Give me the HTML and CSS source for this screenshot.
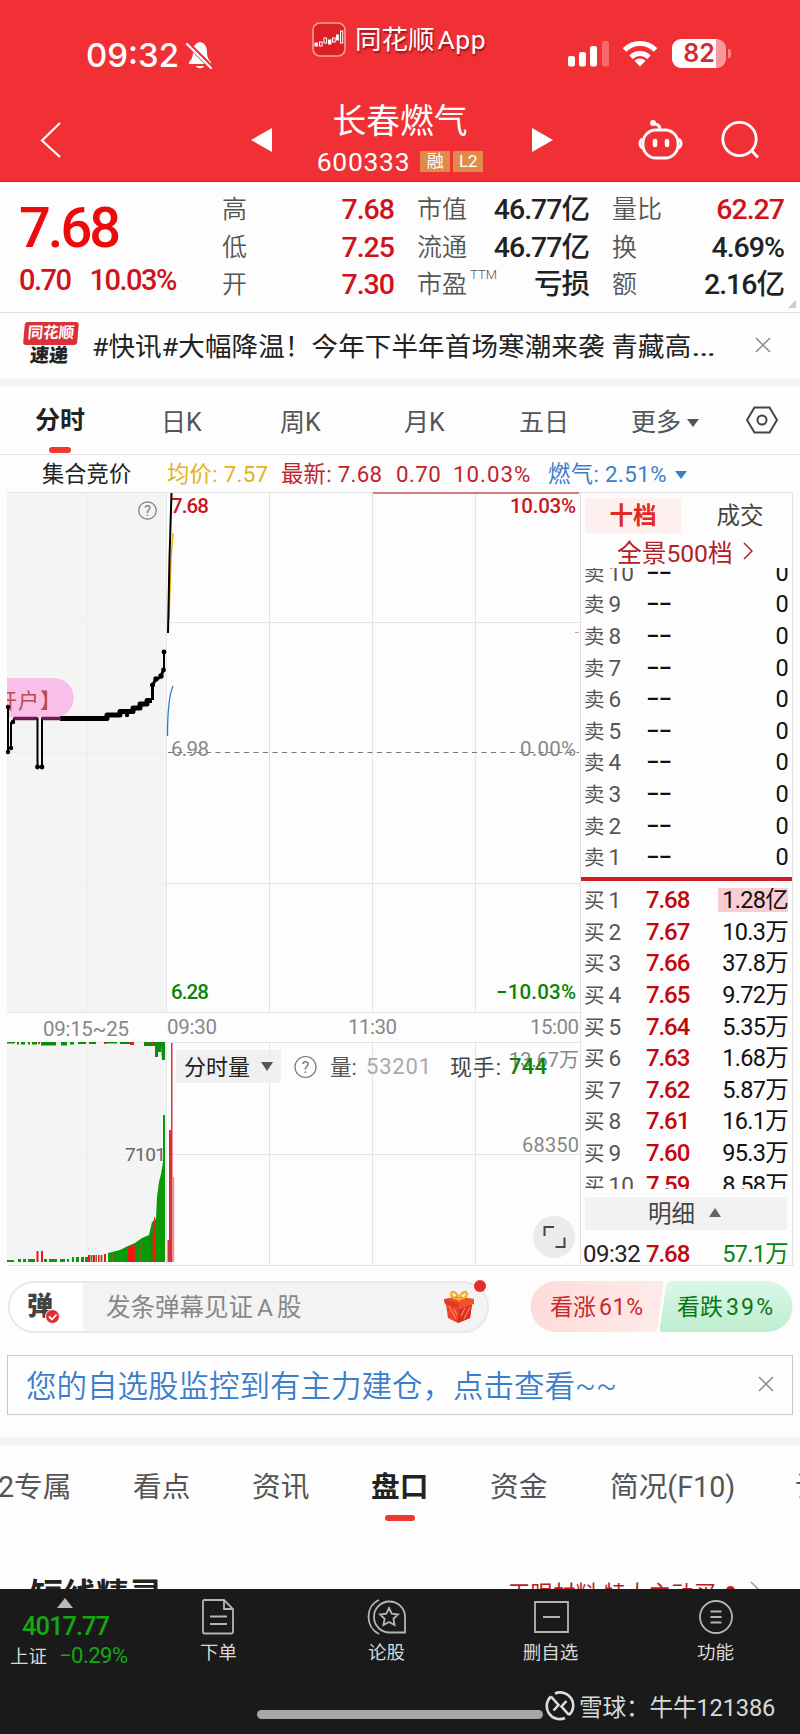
FILE: index.html
```html
<!DOCTYPE html>
<html lang="zh-CN">
<head>
  <meta charset="UTF-8">
  <meta name="viewport" content="width=device-width, initial-scale=1.0">
  <title>长春燃气 600333</title>
  <link rel="stylesheet" href="styles.css">
</head>
<body>
  <header class="header">
    <div class="status-bar">
      <div class="status-time">
        <span>09:32</span>
        <svg width="28" height="30" viewBox="0 0 28 30">
          <path d="M14 2c-5 1-7 5-7 10 0 6-2 8-4 10v2h22v-2c-2-2-4-4-4-10 0-5-2-9-7-10z" fill="#fff"/>
          <path d="M10 26h8c-1 3-7 3-8 0z" fill="#fff"/>
          <path d="M1 3l25 25" stroke="#f13035" stroke-width="5"/>
          <path d="M1 4l24 24" stroke="#fff" stroke-width="2.2" stroke-linecap="round"/>
        </svg>
      </div>
      <div class="app-mark">
        <svg width="34" height="35" viewBox="0 0 34 35">
          <rect x="1" y="1" width="32" height="33" rx="7" fill="#dd2028" stroke="#f9a09f" stroke-width="1.6"/>
          <g fill="#fff" stroke="#fff" stroke-width="1">
            <rect x="3" y="21" width="2.4" height="3"/>
            <rect x="7.5" y="20" width="2.6" height="4" fill="none"/>
            <rect x="12" y="16" width="2.6" height="5" fill="none"/>
            <rect x="16.5" y="18" width="2.4" height="4"/>
            <rect x="20.5" y="16" width="2.6" height="4" fill="none"/>
            <rect x="24.5" y="13" width="1.8" height="5"/>
            <rect x="28.5" y="9" width="2.2" height="12" fill="none"/>
          </g>
        </svg>
        <span>同花顺<b>App</b></span>
      </div>
      <div class="status-icons">
        <svg width="42" height="28" viewBox="0 0 42 28" fill="#fff">
          <rect x="0" y="16" width="7" height="10.5" rx="2"/>
          <rect x="11" y="12" width="7" height="14.5" rx="2"/>
          <rect x="22" y="6" width="7" height="20.5" rx="2"/>
          <rect x="34" y="1" width="7" height="25.5" rx="2" opacity=".28"/>
        </svg>
        <svg width="36" height="28" viewBox="0 0 36 28">
          <g fill="none" stroke="#fff" stroke-width="5">
            <path d="M2.5 10a22 22 0 0 1 31 0"/>
            <path d="M9 17.2a13 13 0 0 1 18 0"/>
          </g>
          <path d="M18 26.5l-5.6-5.8a8 8 0 0 1 11.2 0z" fill="#fff"/>
        </svg>
        <div class="battery"><span>82</span></div>
        <i class="battery-nub"></i>
      </div>
    </div>
    <div class="title-bar">
      <svg class="back" width="24" height="38" viewBox="0 0 24 38"><path d="M21 2L3 19.500l18 16.500" fill="none" stroke="#fff" stroke-width="2.200"/></svg>
      <svg width="22" height="24" viewBox="0 0 22 24"><path d="M0 12L21 0v24z" fill="#fff"/></svg>
      <div class="stock">
        <h1>长春燃气</h1>
        <div class="stock-code"><span>600333</span><b>融</b><b>L2</b></div>
      </div>
      <svg width="22" height="24" viewBox="0 0 22 24"><path d="M22 12L1 0v24z" fill="#fff"/></svg>
      <svg class="robot" width="46" height="42" viewBox="0 0 46 42" fill="none" stroke="#fff" stroke-width="2.800">
        <rect x="5" y="11" width="35" height="28" rx="13"/>
        <path d="M22 11c0-4-2-6-6-6"/>
        <path d="M4.500 20c-3.500 2-3.500 7 0 9M40.500 20c3.500 2 3.500 7 0 9"/>
        <circle cx="15" cy="4" r="1.500"/>
        <path d="M17 22v4M29 22v4" stroke-width="4.500" stroke-linecap="round"/>
      </svg>
      <svg class="search" width="40" height="40" viewBox="0 0 40 40" fill="none" stroke="#fff" stroke-width="2.800">
        <circle cx="18.500" cy="19" r="16.700"/><path d="M30.500 30.500l6.500 7"/>
      </svg>
    </div>
  </header>

  <section class="quote">
    <div class="quote-price">
      <div class="price">7.68</div>
      <div class="change"><span>0.70</span><span>10.03%</span></div>
    </div>
    <dl class="quote-list">
      <dt>高</dt><dd class="red">7.68</dd>
      <dt>低</dt><dd class="red">7.25</dd>
      <dt>开</dt><dd class="red">7.30</dd>
    </dl>
    <dl class="quote-list cap">
      <dt>市值</dt><dd>46.77亿</dd>
      <dt>流通</dt><dd>46.77亿</dd>
      <dt>市盈<sup>TTM</sup></dt><dd>亏损</dd>
    </dl>
    <dl class="quote-list ratio">
      <dt>量比</dt><dd class="red">62.27</dd>
      <dt>换</dt><dd>4.69%</dd>
      <dt>额</dt><dd>2.16亿</dd>
    </dl>
    <i class="corner"></i>
  </section>

  <section class="news">
    <div class="news-logo"><b>同花顺</b><em>速递</em></div>
    <p>#快讯#大幅降温！今年下半年首场寒潮来袭 青藏高<span>…</span></p>
    <svg width="16" height="16" viewBox="0 0 16 16"><path d="M1 1l14 14M15 1L1 15" stroke="#888" stroke-width="1.500"/></svg>
  </section>

  <nav class="periods">
    <span class="active">分时</span>
    <span>日K</span>
    <span>周K</span>
    <span>月K</span>
    <span>五日</span>
    <span>更多<i class="down"></i></span>
    <svg width="32" height="28" viewBox="0 0 32 28" fill="none" stroke="#444" stroke-width="2">
      <path d="M8.500 1.500h15L31 14l-7.500 12.500h-15L1 14z"/><circle cx="16" cy="14" r="4.500"/>
    </svg>
  </nav>

  <div class="legend">
    <span class="auction">集合竞价</span>
    <span class="avg">均价: 7.57</span>
    <span class="last">最新: 7.68</span>
    <span class="diff">0.70</span>
    <span class="pct">10.03%</span>
    <span class="sector">燃气: 2.51%<i class="down"></i></span>
  </div>

  <main class="board">
    <svg class="chart" width="580" height="774" viewBox="0 492 580 774">
      <!-- call auction background -->
      <path d="M7 493h159.500v520H7zM7 1043h159.500v219H7z" fill="#f4f4f4"/>
      <g fill="none" stroke="#e4e4e4">
        <path d="M7 492.500h573M167 622.500h413M167 883.500h413M7 1012.500h573M7 1042.500h573M167 1154.500h413M7 1265.500h573"/>
        <path d="M166.500 493v520M269.500 493v520M372.500 493v520M475.500 493v520M166.500 1043v222M269.500 1043v222M372.500 1043v222M475.500 1043v222"/>
        <path d="M87.500 493v520M87.500 1043v219M7 622.500h160M7 752.500h160M7 883.500h160M7 1154.500h160" stroke-dasharray="2 2" stroke="#e9e9e9"/>
      </g>
      <path d="M373 493h206" stroke="#c8555a" stroke-width="1.500"/>
      <path d="M575 632.500h4" stroke="#d99"/>
      <path d="M168 752.500h411" stroke="#777" stroke-dasharray="5 4.500"/>
      <g font-size="20.500">
        <text x="171" y="513" fill="#c8161d" class="num" textLength="38">7.68</text>
        <text x="510" y="513" fill="#c8161d" class="num" textLength="66">10.03%</text>
        <text x="171" y="756" fill="#888" class="num thin" textLength="38">6.98</text>
        <text x="520" y="756" fill="#888" class="num thin" textLength="56">0.00%</text>
        <text x="171" y="999" fill="#078507" class="num" textLength="38">6.28</text>
        <text x="496" y="999" fill="#078507" class="num" textLength="80">−10.03%</text>
        <text x="43" y="1036" fill="#888" textLength="86">09:15~25</text>
        <text x="167" y="1034" fill="#888" textLength="50">09:30</text>
        <text x="348" y="1034" fill="#888" textLength="49">11:30</text>
        <text x="530" y="1034" fill="#888" textLength="49">15:00</text>
      </g>
      <circle cx="147.500" cy="510.500" r="8.700" fill="none" stroke="#777" stroke-width="1.200"/>
      <text x="147.500" y="516" font-size="14" fill="#777" text-anchor="middle">?</text>

      <!-- danmaku bubble -->
      <path d="M7 678h47a19 19 0 0 1 0 39.500H7z" fill="#f8c0e8"/>
      <svg x="7" y="678" width="66" height="40"><text x="-11" y="30" font-size="21" fill="#b94a52" letter-spacing="1">开户】</text></svg>

      <!-- prices -->
      <path d="M8 707v45M11 722v26M13 722l1-3.500H37.500V767H42V718.500H107" fill="none" stroke="#000" stroke-width="2"/>
      <path d="M60 718.500h47v-3.500h13v-3.500h13v-3.500h7v-4h7v-3.500h5" fill="none" stroke="#000" stroke-width="5" stroke-linejoin="round"/>
      <path d="M14 718.500h23M42 718.500h19" stroke="#6d1555" stroke-width="3.500"/>
      <path d="M152.500 700v-15l3-5 5-3 3-7" fill="none" stroke="#000" stroke-width="3"/>
      <path d="M164 670v-18" stroke="#000" stroke-width="2"/>
      <g fill="#000">
        <circle cx="8" cy="752" r="2.200"/><circle cx="11" cy="748" r="2.200"/><circle cx="13" cy="722" r="2.200"/><circle cx="8" cy="707" r="2.200"/>
        <circle cx="37.500" cy="767" r="2.400"/><circle cx="42" cy="767" r="2.400"/><circle cx="127" cy="715" r="2.200"/>
        <circle cx="152.500" cy="685" r="2.500"/><circle cx="156" cy="679" r="2.700"/><circle cx="161" cy="676" r="2.700"/><circle cx="163.500" cy="670" r="2.400"/><circle cx="164" cy="652" r="2.400"/>
      </g>
      <path d="M169 620l2-62 2-25" fill="none" stroke="#eea812" stroke-width="1.500"/>
      <path d="M168 633l1.500-75 2-65" fill="none" stroke="#000" stroke-width="2"/>
      <path d="M167.500 736c0-25 2-42 5.500-50" fill="none" stroke="#2f7fd0" stroke-width="1.300"/>

      <!-- volume -->
      <g font-size="20" fill="#888">
        <text x="125" y="1161" font-size="19" fill="#666" textLength="41">7101</text>
        <text x="509" y="1067" textLength="70">13.67万</text>
        <text x="522" y="1152" textLength="57">68350</text>
      </g>
      <path d="M7 1262v-2h7v2zM18 1262v-3h3v3zM23 1262v-3h3v3zM28 1262v-3h7v3zM44 1262v-3h3v3zM49 1262v-3h8v3zM60 1262v-3h5v3zM67 1262v-3h2v3zM72 1262v-5h2v5zM76 1262v-5h3v5zM81 1262v-5h3v5zM85 1262v-5h3v5zM108 1262v-9l12-3 8-4 7-3 7-5 7-3 3-13 4-3 1-22 2-15 2-8 2-12v-47h2v147z" fill="#069a06"/>
      <path d="M36.500 1262v-11h2v11zM41 1262v-11h2v11zM128 1262v-15l7-2v17zM151 1262v-26h1.500v26zM154 1262v-45h1v45zM88 1262v-7h2v7zM93 1262v-7h2v7zM98 1262v-7h1.500v7zM104 1262v-8h2v8z" fill="#ef1515"/>
      <path d="M90.500 1262v-7h2v7zM95.500 1262v-7h1.500v7zM100.500 1262v-7h2v7zM112 1262v-9h1v9zM121 1262v-12h1v12zM140 1262v-21h1v21z" fill="#7b6a2e"/>
      <path d="M7 1042h8v1.500H7zM17 1042h2v2.500h-2zM21 1042h4v2.500h-4zM28 1042h2v2.500h-2zM32 1042h5v2.500h-5zM41 1042h15v3.500H41zM61 1042h6v3.500h-6zM70 1042h4v2.500h-4zM78 1042h8v2h-8zM89 1042h7v2h-7zM105 1042h12v1.500h-12zM120 1042h13v2h-13zM144 1042h21v4h-21zM155 1045h3v12h-3zM158 1045h3v7h-3zM161 1045h4v15h-3z" fill="#0b8c0b"/>
      <path d="M38 1042h2v2h-2zM104 1042h2v2h-2zM130 1042h4v3h-4zM151 1042h2v4h-2z" fill="#d22"/>
      <path d="M167.500 1262v-22h1.500v-110h2v-87h1.500v219z" fill="#dc3038"/>
      <path d="M172.500 1177h1.700v85h-1.700z" fill="#eb9095"/>

      <!-- volume caption -->
      <rect x="176" y="1050" width="105" height="33" rx="2" fill="#ececec" opacity=".8"/>
      <text x="184" y="1075" font-size="22" fill="#222">分时量</text>
      <path d="M261 1062h12l-6 9z" fill="#555"/>
      <circle cx="305.500" cy="1067" r="10.500" fill="none" stroke="#777" stroke-width="1.200"/>
      <text x="305.500" y="1073" font-size="16" fill="#777" text-anchor="middle">?</text>
      <text x="330" y="1075" font-size="21.500" fill="#555">量:</text>
      <text x="366" y="1074" font-size="22" fill="#aaa" class="num thin" textLength="65">53201</text>
      <text x="450" y="1075" font-size="22" fill="#444" textLength="51">现手:</text>
      <text x="509" y="1074" font-size="22" fill="#078507" class="num" textLength="38">744</text>

      <!-- fullscreen button -->
      <circle cx="554" cy="1237" r="21" fill="#ebebeb"/>
      <path d="M544.500 1236v-9H554M555.500 1247H564.500v-9.500" fill="none" stroke="#444" stroke-width="2"/>
    </svg>

    <aside class="book">
      <div class="book-tabs"><b>十档</b><span>成交</span></div>
      <div class="book-more">全景500档<svg width="10" height="18" viewBox="0 0 10 18"><path d="M1 1l8 8-8 8" fill="none" stroke="#b52025" stroke-width="1.500"/></svg></div>
      <ul class="asks">
        <li><span>卖<i>10</i></span><b>−−</b><em>0</em></li>
        <li><span>卖<i>9</i></span><b>−−</b><em>0</em></li>
        <li><span>卖<i>8</i></span><b>−−</b><em>0</em></li>
        <li><span>卖<i>7</i></span><b>−−</b><em>0</em></li>
        <li><span>卖<i>6</i></span><b>−−</b><em>0</em></li>
        <li><span>卖<i>5</i></span><b>−−</b><em>0</em></li>
        <li><span>卖<i>4</i></span><b>−−</b><em>0</em></li>
        <li><span>卖<i>3</i></span><b>−−</b><em>0</em></li>
        <li><span>卖<i>2</i></span><b>−−</b><em>0</em></li>
        <li><span>卖<i>1</i></span><b>−−</b><em>0</em></li>
      </ul>
      <ul class="bids">
        <li><span>买<i>1</i></span><b>7.68</b><em class="big">1.28亿</em></li>
        <li><span>买<i>2</i></span><b>7.67</b><em>10.3万</em></li>
        <li><span>买<i>3</i></span><b>7.66</b><em>37.8万</em></li>
        <li><span>买<i>4</i></span><b>7.65</b><em>9.72万</em></li>
        <li><span>买<i>5</i></span><b>7.64</b><em>5.35万</em></li>
        <li><span>买<i>6</i></span><b>7.63</b><em>1.68万</em></li>
        <li><span>买<i>7</i></span><b>7.62</b><em>5.87万</em></li>
        <li><span>买<i>8</i></span><b>7.61</b><em>16.1万</em></li>
        <li><span>买<i>9</i></span><b>7.60</b><em>95.3万</em></li>
        <li><span>买<i>10</i></span><b>7.59</b><em>8.58万</em></li>
      </ul>
      <div class="detail">明细<i class="up"></i></div>
      <div class="tick"><span>09:32</span><b>7.68</b><em>57.1万</em></div>
    </aside>
  </main>

  <section class="chat">
    <div class="chat-input">
      <div class="dan">弹<svg width="15" height="15" viewBox="0 0 15 15"><circle cx="7.500" cy="7.500" r="7" fill="#dc3033" stroke="#fff"/><path d="M4 7.500l3 3 4.500-5" fill="none" stroke="#fff" stroke-width="1.800"/></svg></div>
      <p>发条弹幕见证<span>A</span>股</p>
      <svg class="gift" width="32" height="34" viewBox="0 0 32 34">
        <path d="M3 14l13 5 13-5-2 14-12 5-10-5z" fill="#ee4127"/>
        <path d="M16 19l13-5-2 14-12 5z" fill="#d92d20"/>
        <path d="M1 9l14-3 16 3v5l-15 5-14-5z" fill="#f0512f"/>
        <path d="M1 9l15 4v6L2 14z" fill="#e03a25"/>
        <path d="M6 16l7 13M11 19l3 6M27 17l-6 12M22 18l-4 8" stroke="#f98a57" stroke-width="1.200"/>
        <path d="M16 9C8 9 6 2 10 2c3 0 5 4 6 7 1-3 3-7 6-7 4 0 2 7-6 7z" fill="none" stroke="#f5ad2a" stroke-width="2.400"/>
      </svg>
      <i class="dot"></i>
    </div>
    <div class="vote">
      <svg width="263" height="52" viewBox="530 1281 263 52">
        <defs>
          <linearGradient id="up" x2="1" y2="0"><stop stop-color="#fddcd9"/><stop offset="1" stop-color="#fdebe9"/></linearGradient>
          <linearGradient id="dn" x2="0" y2="1"><stop stop-color="#dcf7e7"/><stop offset="1" stop-color="#bdedd0"/></linearGradient>
        </defs>
        <path d="M556 1281h107q1 0 0 5l-5 41q-1 5-5 5h-97a25.500 25.500 0 0 1 0-51z" fill="url(#up)"/>
        <path d="M672 1281h95a25.500 25.500 0 0 1 0 51H662q-3 0-2-5l6-41q1-5 6-5z" fill="url(#dn)"/>
        <g font-size="23">
          <text x="550" y="1315" fill="#c8282c" textLength="46">看涨</text>
          <text x="599" y="1315" fill="#c8282c" textLength="44">61%</text>
          <text x="677" y="1315" fill="#07780f" textLength="46">看跌</text>
          <text x="726" y="1315" fill="#07780f" textLength="47">39%</text>
        </g>
      </svg>
    </div>
  </section>

  <div class="notice">
    <p>您的自选股监控到有主力建仓，点击查看~~</p>
    <svg width="16" height="16" viewBox="0 0 16 16"><path d="M1 1l14 14M15 1L1 15" stroke="#888" stroke-width="1.500"/></svg>
  </div>

  <nav class="sections">
    <span>2专属</span>
    <span>看点</span>
    <span>资讯</span>
    <span class="active">盘口</span>
    <span>资金</span>
    <span>简况(F10)</span>
    <span>诊股</span>
  </nav>

  <section class="elf">
    <h2>短线精灵</h2>
    <p>天眼材料 特大主动买</p>
    <i></i>
    <svg width="10" height="18" viewBox="0 0 10 18"><path d="M1 1l8 8-8 8" fill="none" stroke="#999" stroke-width="1.500"/></svg>
  </section>

  <footer class="toolbar">
    <div class="index">
      <i class="up"></i>
      <b>4017.77</b>
      <p>上证<span>−0.29%</span></p>
    </div>
    <div class="tool">
      <svg width="34" height="36" viewBox="0 0 34 36"><path d="M2.500 1H22l9 9v23q0 1.500-1.500 1.500h-27Q1 34.500 1 33V2.500Q1 1 2.500 1zM22 1v9h9M8 17.500h17M8 25h17"/></svg>
      <span>下单</span>
    </div>
    <div class="tool">
      <svg width="40" height="36" viewBox="0 0 40 36"><path d="M12 1C-2 7-2 28 12 35M38 33.500H23A15.500 15.500 0 1 1 38 18zM22 9l2.700 5.700 6.300.8-4.600 4.300 1.200 6.200-5.600-3-5.600 3 1.200-6.200-4.600-4.300 6.300-.8z"/></svg>
      <span>论股</span>
    </div>
    <div class="tool">
      <svg width="36" height="36" viewBox="0 0 36 36"><path d="M2 3h33v30H2zM10 18h17"/></svg>
      <span>删自选</span>
    </div>
    <div class="tool">
      <svg width="36" height="36" viewBox="0 0 36 36"><circle cx="18" cy="18" r="16"/><path d="M12.500 12.500h11M12.500 18h11M12.500 23.500h11"/></svg>
      <span>功能</span>
    </div>
    <div class="home">
      <i class="home-bar"></i>
      <svg width="30" height="30" viewBox="0 0 30 30" fill="none" stroke="#ddd" stroke-width="2.600">
        <path d="M10 2.500A13 13 0 0 1 24 24M20 27A13 13 0 0 1 6 5.500"/>
        <path d="M6 5.500l7.500 8.500-5 5.500M24 24l-7.500-8.500 5-5.500"/>
      </svg>
      <span>雪球：牛牛121386</span>
    </div>
  </footer>
</body>
</html>
```

FILE: styles.css
```css
* {
  box-sizing: border-box;
}

body {
  margin: 0;
  width: 800px;
  height: 1734px;
  overflow: hidden;
  background: #fdfdfd;
  color: #222;
  font-family: Roboto, "Noto Sans CJK SC", sans-serif;
}

h1, h2, p, dl, dd, ul {
  margin: 0;
  padding: 0;
}

svg {
  display: block;
  flex: none;
}

i, em {
  font-style: normal;
}

.red {
  color: #d0121b;
}

.down {
  display: inline-block;
  border: 6px solid transparent;
  border-top: 8px solid currentColor;
  border-bottom: 0;
}

.up {
  display: inline-block;
  border: 6px solid transparent;
  border-bottom: 9px solid #666;
  border-top: 0;
}

/* header */
.header {
  height: 182px;
  background: #f13035;
  border-bottom: 1px solid #c42a30;
  color: #fff;
}

.status-bar {
  display: grid;
  grid-template-columns: 312px 256px 232px;
  height: 95px;
}

.status-time {
  display: flex;
  align-items: center;
  gap: 7px;
  height: 109px;
  padding-left: 86px;
  font: 500 33px Inter, sans-serif;
}

.app-mark {
  display: flex;
  align-items: center;
  gap: 9px;
  height: 78px;
  font-size: 26.500px;
  line-height: 30px;
  text-shadow: 1px 2px 2px rgba(80, 0, 0, .6);
}

.app-mark span {
  padding-top: 2px;
}

.app-mark b {
  margin-left: 3px;
  font-weight: 400;
  letter-spacing: 0.500px;
}

.status-icons {
  display: flex;
  align-items: center;
  height: 107px;
}

.status-icons svg {
  margin-right: 12px;
}

.battery {
  width: 54px;
  height: 29px;
  margin-left: 2px;
  border-radius: 9px;
  background: linear-gradient(90deg, #fff 82%, #f9979a 82%);
  color: #d32a30;
  font: 600 25px/29px Inter, sans-serif;
  text-align: center;
}

.battery-nub {
  width: 3px;
  height: 9px;
  margin-left: 2px;
  border-radius: 0 4px 4px 0;
  background: #f8888c;
}

.title-bar {
  display: flex;
  align-items: center;
  height: 89px;
}

.back {
  margin: 0 188px 0 39px;
}

.stock {
  width: 258px;
  padding: 0 4px 0 0;
  text-align: center;
}

.stock h1 {
  font-size: 33.700px;
  font-weight: 400;
  line-height: 44px;
}

.stock-code {
  display: flex;
  align-items: center;
  justify-content: center;
  gap: 3px;
  height: 36px;
}

.stock-code span {
  margin-right: 7px;
  font-size: 26.500px;
  font-weight: 400;
  letter-spacing: 0.700px;
}

.stock-code b {
  width: 30px;
  height: 21px;
  background: #e08b49;
  font-size: 17px;
  font-weight: 400;
  line-height: 21px;
}

.robot {
  margin: 0 37px 0 85px;
}

/* quote */
.quote {
  display: flex;
  position: relative;
  height: 131px;
  padding-top: 9px;
  border-bottom: 1px solid #e2e2e2;
}

.quote-price {
  width: 222px;
  padding-left: 19px;
  color: #d0121b;
}

.price {
  height: 74px;
  color: #ed0a0c;
  font-size: 56px;
  font-weight: 500;
  letter-spacing: -3px;
  line-height: 74px;
}

.change {
  display: flex;
  gap: 19px;
  font-size: 29px;
  font-weight: 500;
  letter-spacing: -1.500px;
  line-height: 30px;
}

.quote-list {
  display: grid;
  grid-template-columns: 52px 120px;
  grid-auto-rows: 37.500px;
  align-content: start;
  width: 172px;
  line-height: 37.500px;
  white-space: nowrap;
}

.quote-list.cap {
  margin-left: 23px;
}

.quote-list.ratio {
  margin-left: 23px;
}

.quote-list dt {
  color: #555;
  font-size: 25px;
  font-weight: 350;
}

.quote-list sup {
  display: inline-block;
  margin-left: 3px;
  font-size: 13px;
  letter-spacing: 0;
  line-height: 13px;
  vertical-align: 14px;
}

.quote-list dd {
  font-size: 28.500px;
  font-weight: 500;
  letter-spacing: -1px;
  text-align: right;
}

.corner {
  position: absolute;
  right: 4px;
  bottom: 4px;
  border: 4.500px solid #ccc;
  border-top-color: transparent;
  border-left-color: transparent;
}

/* news */
.news {
  display: flex;
  align-items: center;
  height: 73px;
  padding: 0 29px 3px 23px;
  border-bottom: 7px solid #f4f4f4;
}

.news-logo {
  width: 54px;
  margin-right: 15px;
  text-align: center;
  transform: skewX(-5deg);
}

.news-logo b {
  display: block;
  height: 23px;
  border-radius: 3px;
  background: #dc3038;
  color: #fff;
  font-size: 15.500px;
  line-height: 23px;
}

.news-logo em {
  display: block;
  font-size: 19px;
  font-weight: 900;
  line-height: 22px;
}

.news p {
  flex: 1;
  color: #222;
  font-size: 26.500px;
  letter-spacing: 0.150px;
  white-space: nowrap;
}

.news span {
  display: inline-block;
  transform: scaleX(1.4);
  transform-origin: left;
}

/* period tabs */
.periods {
  display: grid;
  grid-template-columns: 161px 119px 124px 115px 112px 115px auto;
  align-items: center;
  height: 69px;
  border-bottom: 1px solid #e6e6e6;
  color: #555;
  font-size: 25px;
}

.periods .down {
  margin: 0 0 4px 6px;
}

.periods .active {
  align-self: end;
  width: 50px;
  height: 50px;
  margin-left: 35px;
  color: #222;
  font-weight: 700;
  line-height: 34px;
}

.periods .active::after,
.sections .active::after {
  display: block;
  width: 22px;
  height: 6px;
  margin: 9px auto 0;
  border-radius: 3px;
  background: #ed3a2f;
  content: "";
}

.legend {
  display: grid;
  grid-template-columns: 125px 114px 115px 57px 95px auto;
  height: 37px;
  padding-left: 42px;
  font-size: 22.300px;
  line-height: 38px;
  white-space: nowrap;
}

.legend .avg,
.legend .last {
  letter-spacing: 0.300px;
}

.legend .avg {
  color: #e5b11c;
}

.legend .last,
.legend .diff,
.legend .pct {
  color: #c0242a;
}

.legend .pct {
  letter-spacing: 1px;
}

.legend .diff {
  letter-spacing: 0.400px;
}

.legend .sector {
  color: #3b7ecb;
  letter-spacing: 0.400px;
}

.legend .down {
  margin: 0 0 3px 8px;
}

/* chart and order book */
.board {
  display: flex;
  height: 774px;
}

.num {
  font-weight: 500;
}

.thin {
  font-weight: 400;
}

.book {
  width: 213px;
  border: 1px solid #e2e2e2;
  font-size: 24px;
}

.book-tabs {
  display: grid;
  grid-template-columns: 96px 1fr;
  height: 43px;
  padding: 5px 0 0 4px;
  font-size: 23.500px;
  line-height: 36px;
  text-align: center;
}

.book-tabs b {
  height: 35px;
  background: #fdf0ef;
  color: #e02a22;
}

.book-tabs span {
  padding-left: 7px;
  color: #444;
}

.book-more {
  display: flex;
  align-items: center;
  gap: 10px;
  height: 32px;
  padding: 0 0 2px 36px;
  color: #b52025;
  font-size: 24.700px;
}

.book ul {
  overflow: hidden;
  list-style: none;
}

.asks {
  display: flex;
  flex-direction: column;
  justify-content: flex-end;
  height: 313px;
  padding-bottom: 4px;
  border-bottom: 4px solid #cf2027;
}

.bids {
  height: 308px;
  padding-top: 3px;
}

.book li {
  display: grid;
  flex: none;
  grid-template-columns: 62px 60px 1fr;
  height: 31.650px;
  padding: 0 4px 0 3px;
  line-height: 32px;
}

.book li span {
  color: #555;
  font-size: 20.500px;
}

.book li i {
  margin-left: 4px;
  font-size: 22.500px;
}

.book li b {
  color: #111;
  font-weight: 500;
  letter-spacing: -1px;
}

.book .bids b,
.tick b {
  color: #c4070b;
  font-weight: 500;
  letter-spacing: -1.100px;
}

.book li em,
.tick em {
  color: #111;
  font-size: 23.500px;
  letter-spacing: -0.700px;
  text-align: right;
}

.book li .big {
  height: 24px;
  margin-top: 4px;
  margin-left: 12px;
  background: #f9cdd1;
  line-height: 24px;
}

.detail {
  display: flex;
  align-items: center;
  justify-content: center;
  gap: 14px;
  height: 33px;
  margin: 8px 5px 0 4px;
  padding: 0 3px 3px 0;
  background: #f2f2f2;
  color: #444;
  font-size: 23.500px;
}

.tick {
  display: grid;
  grid-template-columns: 63px 60px 1fr;
  height: 34px;
  padding: 0 4px 0 2px;
  line-height: 48px;
}

.tick span {
  letter-spacing: -0.500px;
}

.book .tick em {
  color: #078507;
}

/* chat */
.chat {
  display: flex;
  justify-content: space-between;
  height: 89px;
  padding: 15px 7px 0 8px;
}

.chat-input {
  display: flex;
  position: relative;
  align-items: center;
  width: 481px;
  height: 52px;
  border: 2px solid #e9e9e9;
  border-radius: 26px;
  background: linear-gradient(90deg, #fff 73px, #f3f3f3 73px);
}

.dan {
  display: flex;
  align-items: flex-end;
  width: 96px;
  padding: 0 0 2px 17px;
  color: #444;
  font-size: 26px;
  font-weight: 900;
  line-height: 36px;
}

.dan svg {
  margin-left: -8px;
}

.chat-input p {
  flex: 1;
  padding-bottom: 3px;
  color: #888;
  font-size: 24.500px;
}

.chat-input p span {
  margin: 0 4px;
}

.gift {
  margin-right: 12px;
}

.dot {
  position: absolute;
  top: -3px;
  right: 1px;
  width: 12px;
  height: 12px;
  border-radius: 50%;
  background: #e03033;
}

/* notice */
.notice {
  display: flex;
  align-items: center;
  justify-content: space-between;
  height: 60px;
  margin: 0 7px 22px;
  padding: 0 18px 2px;
  border: 1px solid #c9c9c9;
  color: #3b7ecb;
  font-size: 30.500px;
  font-weight: 350;
}

/* lower tabs */
.sections {
  display: grid;
  grid-template-columns: 142px 119px 119px 119px 120px 185px 14px;
  height: 93px;
  overflow: hidden;
  border-top: 9px solid #f4f4f4;
  color: #555;
  font-size: 28.700px;
  line-height: 83px;
  white-space: nowrap;
}

.sections span {
  margin-left: -9px;
}

.sections span:first-child {
  margin-left: -2px;
}

.sections .active {
  width: 58px;
  color: #222;
  font-weight: 700;
}

.sections .active::after {
  width: 30px;
  margin-top: -14px;
}

.elf {
  display: flex;
  align-items: flex-start;
  height: 59px;
  padding: 42px 0 0 30px;
  overflow: hidden;
}

.elf h2 {
  width: 478px;
  font-size: 33px;
  line-height: 48px;
}

.elf p {
  color: #b52025;
  font-size: 22.500px;
  line-height: 44px;
}

.elf i {
  width: 9px;
  height: 9px;
  margin: 14px 15px 0 10px;
  border-radius: 50%;
  background: #b52025;
}

.elf svg {
  margin-top: 9px;
}

/* bottom toolbar */
.toolbar {
  display: grid;
  grid-template-columns: 136px 165px 171px 157px 173px;
  grid-template-rows: 93px 52px;
  height: 145px;
  overflow: hidden;
  background: #1a1a1a;
  color: #d8d8d8;
}

.index {
  padding: 9px 0 0 10px;
  white-space: nowrap;
}

.index .up {
  display: block;
  width: 0;
  margin-left: 47px;
  border-width: 0 8px 10px;
  border-bottom-color: #bbb;
}

.index b {
  display: block;
  padding-left: 12px;
  color: #14a814;
  font-size: 25.500px;
  font-weight: 500;
  letter-spacing: -1px;
  line-height: 36px;
}

.index p {
  font-size: 18.500px;
  line-height: 23px;
}

.index p span {
  margin-left: 12px;
  color: #14a814;
  font-size: 22px;
  letter-spacing: -0.500px;
}

.tool {
  display: flex;
  flex-direction: column;
  align-items: center;
  padding-top: 10px;
  font-size: 18.500px;
  line-height: 36px;
}

.tool svg {
  fill: none;
  stroke: #b5b5b5;
  stroke-width: 1.800;
}

.home {
  display: flex;
  grid-column: 1 / -1;
  align-items: center;
  padding: 0 0 4px 257px;
  font-size: 23.700px;
}

.home-bar {
  width: 286px;
  height: 9px;
  margin: 16px 2px 0 0;
  border-radius: 5px;
  background: #a6a6a6;
}

.home span {
  margin-left: 4px;
  letter-spacing: -0.200px;
  white-space: nowrap;
}
```
